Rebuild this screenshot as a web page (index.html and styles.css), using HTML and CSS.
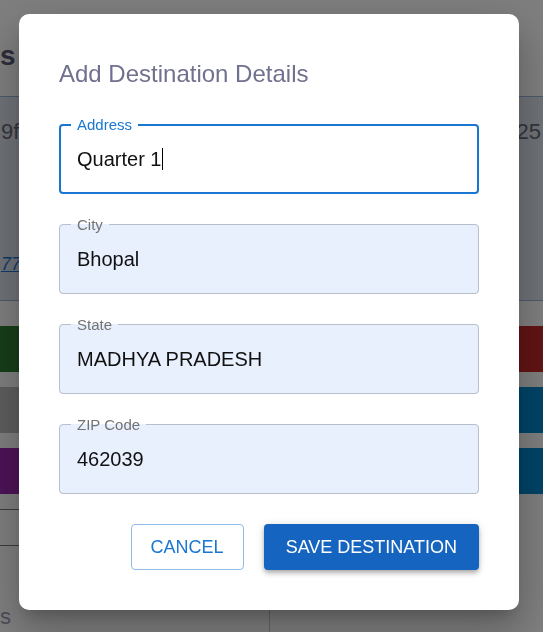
FILE: index.html
```html
<!DOCTYPE html>
<html lang="en">
<head>
<meta charset="utf-8">
<title>Add Destination Details</title>
<link rel="stylesheet" href="styles.css">
</head>
<body>
<div class="page">
  <h1 class="page-title">s</h1>
  <div class="columns">
    <section class="col col-left">
      <div class="card">
        <div class="card-id">9f</div>
        <a class="card-link" href="#">772</a>
      </div>
      <div class="bars">
        <span class="bar bar-green"></span>
        <span class="bar bar-grey"></span>
        <span class="bar bar-purple"></span>
      </div>
      <ul class="list">
        <li></li>
        <li></li>
      </ul>
      <div class="foot-text">s</div>
    </section>
    <section class="col col-right">
      <div class="card">
        <div class="card-id card-id-right">25</div>
      </div>
      <div class="bars">
        <span class="bar bar-red"></span>
        <span class="bar bar-blue"></span>
        <span class="bar bar-blue"></span>
      </div>
      <div class="foot-panel"></div>
    </section>
  </div>
</div>

<div class="backdrop">
  <div class="dialog" role="dialog" aria-labelledby="dlg-title">
    <h2 class="dialog-title" id="dlg-title">Add Destination Details</h2>
    <div class="fields">
      <fieldset class="field field-focused">
        <legend>Address</legend>
        <div class="value">Quarter 1<span class="caret"></span></div>
      </fieldset>
      <fieldset class="field">
        <legend>City</legend>
        <div class="value">Bhopal</div>
      </fieldset>
      <fieldset class="field">
        <legend>State</legend>
        <div class="value">MADHYA PRADESH</div>
      </fieldset>
      <fieldset class="field">
        <legend>ZIP Code</legend>
        <div class="value">462039</div>
      </fieldset>
    </div>
    <div class="actions">
      <button class="btn btn-outline" type="button">Cancel</button>
      <button class="btn btn-primary" type="button">Save Destination</button>
    </div>
  </div>
</div>
</body>
</html>
```

FILE: styles.css
```css
html, body {
  margin: 0;
  height: 632px;
  overflow: hidden;
}

body {
  background: #ffffff;
  font-family: "Liberation Sans", Arial, sans-serif;
  color: #222;
}

/* ---------- background page ---------- */
.page {
  margin: 0 -24px;
}

.page-title {
  margin: 38px 0 0 24px;
  font-size: 28px;
  line-height: 36px;
  font-weight: 700;
  color: #5c5c78;
}

.columns {
  margin-top: 22px;
  display: grid;
  grid-template-columns: 293px 1fr;
}

.col-left {
  padding-right: 8px;
}

.col-right {
  padding-left: 8px;
}

.card {
  height: 205px;
  box-sizing: border-box;
  border: 1px solid #9ab4dc;
  background: #dfe5ef;
  border-radius: 4px;
  padding: 22px 24px 0;
  display: flex;
  flex-direction: column;
}

.card-id {
  font-size: 22px;
  line-height: 26px;
  color: #6a6a7a;
}

.card-id-right {
  text-align: right;
  padding-right: 1px;
}

.card-link {
  margin-top: 108px;
  font-size: 18px;
  line-height: 22px;
  color: #1976d2;
  font-style: italic;
}

.bars {
  margin-top: 25px;
  display: flex;
  flex-direction: column;
  gap: 15px;
}

.bar {
  display: block;
  height: 46px;
  border-radius: 4px;
}

.bar-green { background: #2e7d32; }
.bar-grey { background: #bdbdbd; }
.bar-purple { background: #9c27b0; }
.bar-red { background: #c62828; }
.bar-blue { background: #0288d1; }

.list {
  list-style: none;
  margin: 15px 0 0;
  padding: 0;
}

.list li {
  height: 35px;
  border-top: 1px solid #7a7a7a;
}

.foot-text {
  margin-left: 24px;
  margin-top: 16px;
  font-size: 22px;
  line-height: 40px;
  color: #9a9ab4;
}

.foot-panel {
  margin: 116px 0 0 -8px;
  height: 40px;
  border-left: 1px solid #c8c8c8;
}

/* ---------- modal ---------- */
.backdrop {
  position: fixed;
  inset: 0;
  background: rgba(0, 0, 0, 0.5);
  display: flex;
  align-items: flex-start;
  padding: 14px 0 0 19px;
}

.dialog {
  width: 500px;
  box-sizing: border-box;
  background: #ffffff;
  border-radius: 10px;
  padding: 46px 40px 40px;
  box-shadow: 0 11px 15px -7px rgba(0, 0, 0, 0.2),
              0 24px 38px 3px rgba(0, 0, 0, 0.14),
              0 9px 46px 8px rgba(0, 0, 0, 0.12);
}

.dialog-title {
  margin: 0;
  font-size: 24px;
  line-height: 28px;
  font-weight: 400;
  color: #70708f;
}

.fields {
  margin-top: 28px;
  display: flex;
  flex-direction: column;
  gap: 22px;
}

.field {
  margin: 0;
  min-width: 0;
  border: 1px solid #b7bfcc;
  border-radius: 4px;
  background: #e8f0fe;
  padding: 14px 17px 22px;
}

.field legend {
  margin-left: -6px;
  padding: 0 6px;
  font-size: 15px;
  line-height: 17px;
  color: #737373;
}

.field-focused {
  border: 2px solid #1976d2;
  background: #ffffff;
  padding: 13px 16px 21px;
}

.field-focused legend {
  line-height: 18px;
  color: #1976d2;
}

.value {
  font-size: 20px;
  line-height: 24px;
  color: #111111;
  white-space: nowrap;
}

.caret {
  display: inline-block;
  width: 1px;
  height: 22px;
  margin-left: 1px;
  background: #000000;
  vertical-align: -4px;
}

.actions {
  margin-top: 30px;
  display: flex;
  justify-content: flex-end;
  gap: 20px;
}

.btn {
  height: 46px;
  box-sizing: border-box;
  border-radius: 4px;
  font-family: "Liberation Sans", Arial, sans-serif;
  font-size: 18px;
  line-height: 1;
  text-transform: uppercase;
  cursor: pointer;
}

.btn-outline {
  padding: 0 19px;
  background: #ffffff;
  border: 1px solid #90bce9;
  color: #1976d2;
}

.btn-primary {
  padding: 0 22px;
  background: #1565c0;
  border: none;
  color: #ffffff;
  box-shadow: 0 2px 4px -1px rgba(0, 0, 0, 0.2),
              0 4px 5px 0 rgba(0, 0, 0, 0.14),
              0 1px 10px 0 rgba(0, 0, 0, 0.12);
}
```
